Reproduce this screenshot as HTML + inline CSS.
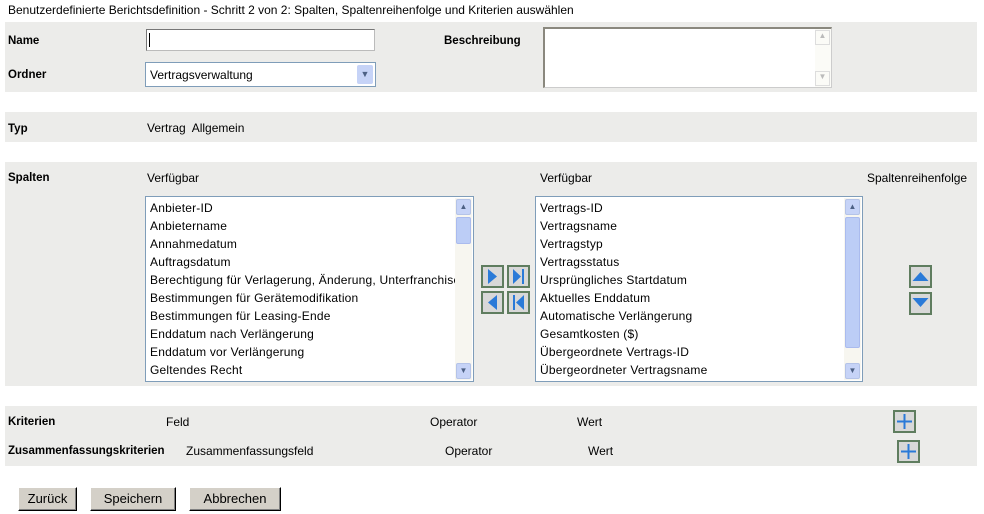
<!DOCTYPE html>
<html><head><meta charset="utf-8"><style>
*{margin:0;padding:0;box-sizing:border-box}
body{width:984px;height:514px;background:#fff;font-family:"Liberation Sans",sans-serif;font-size:12px;color:#000;position:relative;overflow:hidden}
.a{position:absolute;white-space:nowrap}
.p{position:absolute;left:5px;width:972px;background:#ececea}
.b{font-weight:bold;font-size:11.5px;margin-top:2px}
.list{position:absolute;border:1px solid #7f9db9;background:#fff;box-shadow:0 0 0 1px #fff inset}
.list .it{position:absolute;left:4px;font-size:12px;letter-spacing:0.2px;white-space:nowrap}
.sb{position:absolute;right:1px;top:1px;bottom:1px;width:17px;background:#f7f6f0}
.sa{position:absolute;left:1px;width:15px;height:16px;background:#c6d3f7;border:1px solid #b4c3e8;border-radius:2px;color:#4d6185;font-size:8px;text-align:center;line-height:14px}
.th{position:absolute;left:1px;width:15px;background:#bccdf6;border:1px solid #aabbee;border-radius:2px}
.pb{position:absolute;border:1px solid #000;border-top-color:#fff;border-left-color:#fff;background:#d4d0c8;box-shadow:inset -1px -1px 0 #808080;font-size:13px;text-align:center;line-height:21px}
</style></head><body>
<div class="a" style="left:8px;top:3px">Benutzerdefinierte Berichtsdefinition - Schritt 2 von 2: Spalten, Spaltenreihenfolge und Kriterien auswählen</div>

<div class="p" style="top:22px;height:70px"></div>
<div class="a b" style="left:8px;top:33px">Name</div>
<div class="a" style="left:146px;top:29px;width:229px;height:22px;background:#fff;border:1px solid #bbb;border-top-color:#777;border-left-color:#777"><div style="position:absolute;left:2px;top:3px;width:1px;height:14px;background:#000"></div></div>
<div class="a b" style="left:8px;top:67px">Ordner</div>
<div class="a" style="left:145px;top:62px;width:231px;height:25px;background:#fff;border:1px solid #7f9db9"><span style="position:absolute;left:4px;top:5px">Vertragsverwaltung</span><div style="position:absolute;right:2px;top:2px;width:16px;height:19px;background:#c6d3f7;border-radius:2px;color:#4d6185;font-size:9px;text-align:center;line-height:19px">&#9660;</div></div>
<div class="a b" style="left:444px;top:33px">Beschreibung</div>
<div class="a" style="left:543px;top:27px;width:289px;height:61px;background:#fff;border:1px solid #ccc;border-top:2px solid #8a887e;border-left:2px solid #8a887e"><div style="position:absolute;right:0;top:0;width:16px;height:58px;background:#fbfbf7"><div style="position:absolute;top:1px;left:0;width:15px;height:15px;border:1px solid #ddd;color:#bbb;font-size:8px;text-align:center">&#9650;</div><div style="position:absolute;bottom:1px;left:0;width:15px;height:15px;border:1px solid #ddd;color:#bbb;font-size:8px;text-align:center">&#9660;</div></div></div>

<div class="p" style="top:112px;height:30px"></div>
<div class="a b" style="left:8px;top:121px">Typ</div>
<div class="a" style="left:147px;top:121px">Vertrag&nbsp; Allgemein</div>

<div class="p" style="top:162px;height:224px"></div>
<div class="a b" style="left:8px;top:170px">Spalten</div>
<div class="a" style="left:147px;top:171px">Verfügbar</div>
<div class="a" style="left:540px;top:171px">Verfügbar</div>
<div class="a" style="left:867px;top:171px">Spaltenreihenfolge</div>

<div class="list" style="left:145px;top:196px;width:329px;height:186px">
<div class="it" style="top:4px">Anbieter-ID</div>
<div class="it" style="top:22px">Anbietername</div>
<div class="it" style="top:40px">Annahmedatum</div>
<div class="it" style="top:58px">Auftragsdatum</div>
<div class="it" style="top:76px;width:305px;overflow:hidden">Berechtigung für Verlagerung, Änderung, Unterfranchise</div>
<div class="it" style="top:94px">Bestimmungen für Gerätemodifikation</div>
<div class="it" style="top:112px">Bestimmungen für Leasing-Ende</div>
<div class="it" style="top:130px">Enddatum nach Verlängerung</div>
<div class="it" style="top:148px">Enddatum vor Verlängerung</div>
<div class="it" style="top:166px">Geltendes Recht</div>
<div class="sb"><div class="sa" style="top:1px">&#9650;</div><div class="th" style="top:19px;height:27px"></div><div class="sa" style="bottom:1px">&#9660;</div></div>
</div>

<div class="list" style="left:535px;top:196px;width:328px;height:186px">
<div class="it" style="top:4px">Vertrags-ID</div>
<div class="it" style="top:22px">Vertragsname</div>
<div class="it" style="top:40px">Vertragstyp</div>
<div class="it" style="top:58px">Vertragsstatus</div>
<div class="it" style="top:76px">Ursprüngliches Startdatum</div>
<div class="it" style="top:94px">Aktuelles Enddatum</div>
<div class="it" style="top:112px">Automatische Verlängerung</div>
<div class="it" style="top:130px">Gesamtkosten ($)</div>
<div class="it" style="top:148px">Übergeordnete Vertrags-ID</div>
<div class="it" style="top:166px">Übergeordneter Vertragsname</div>
<div class="sb"><div class="sa" style="top:1px">&#9650;</div><div class="th" style="top:19px;height:131px"></div><div class="sa" style="bottom:1px">&#9660;</div></div>
</div>

<svg class="a" style="left:480px;top:264px" width="52" height="52">
<g fill="#d8d8d8" stroke="#5f7d5f" stroke-width="2"><rect x="2" y="2" width="21" height="21"/><rect x="28" y="2" width="21" height="21"/><rect x="2" y="28" width="21" height="21"/><rect x="28" y="28" width="21" height="21"/></g>
<g fill="#2a7ad8"><path d="M8 5L17 12.5L8 20Z"/><path d="M33 5L41 12.5L33 20Z"/><rect x="42" y="5" width="2" height="15"/><path d="M17 31L8 38.5L17 46Z"/><path d="M44 31L36 38.5L44 46Z"/><rect x="33" y="31" width="2" height="15"/></g>
</svg>
<svg class="a" style="left:908px;top:264px" width="26" height="52">
<g fill="#d8d8d8" stroke="#5f7d5f" stroke-width="2"><rect x="2" y="2" width="21" height="21"/><rect x="2" y="29" width="21" height="21"/></g>
<g fill="#2a7ad8"><path d="M4.5 17L12.5 8L20.5 17Z"/><path d="M4.5 34L20.5 34L12.5 43Z"/></g>
</svg>

<div class="p" style="top:406px;height:60px"></div>
<div class="a b" style="left:8px;top:414px">Kriterien</div>
<div class="a" style="left:166px;top:415px">Feld</div>
<div class="a" style="left:430px;top:415px">Operator</div>
<div class="a" style="left:577px;top:415px">Wert</div>
<div class="a b" style="left:8px;top:443px">Zusammenfassungskriterien</div>
<div class="a" style="left:186px;top:444px">Zusammenfassungsfeld</div>
<div class="a" style="left:445px;top:444px">Operator</div>
<div class="a" style="left:588px;top:444px">Wert</div>
<svg class="a" style="left:892px;top:409px" width="26" height="26"><rect x="2" y="2" width="21" height="21" fill="#d8d8d8" stroke="#5f7d5f" stroke-width="2"/><g fill="#2a7ad8"><rect x="5" y="11.5" width="15" height="2"/><rect x="11.5" y="5" width="2" height="15"/></g></svg>
<svg class="a" style="left:896px;top:439px" width="26" height="26"><rect x="2" y="2" width="21" height="21" fill="#d8d8d8" stroke="#5f7d5f" stroke-width="2"/><g fill="#2a7ad8"><rect x="5" y="11.5" width="15" height="2"/><rect x="11.5" y="5" width="2" height="15"/></g></svg>

<div class="pb" style="left:18px;top:487px;width:59px;height:24px">Zurück</div>
<div class="pb" style="left:90px;top:487px;width:86px;height:24px">Speichern</div>
<div class="pb" style="left:189px;top:487px;width:92px;height:24px">Abbrechen</div>
</body></html>
